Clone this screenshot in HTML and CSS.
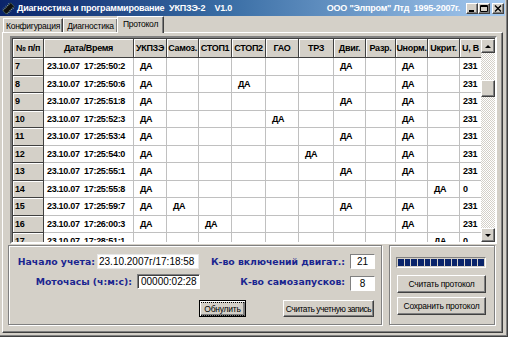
FILE: index.html
```html
<!DOCTYPE html>
<html lang="ru">
<head>
    <meta charset="UTF-8">
    <title>Диагностика и программирование УКПЗЭ-2</title>
    <link rel="stylesheet" href="styles.css">
</head>
<body>
    <div class="window">
        <div class="titlebar">
            <svg class="app-icon" width="13" height="13" viewBox="0 0 13 13">
                <g transform="rotate(-45 6.5 6.5)">
                    <rect x="1" y="4" width="11" height="5" fill="#101010" stroke="#5a7a5a" stroke-width="0.6"/>
                    <path d="M2 3v1M4 3v1M6 3v1M8 3v1M10 3v1M2 9v1M4 9v1M6 9v1M8 9v1M10 9v1" stroke="#c8d8c8" stroke-width="0.8"/>
                </g>
            </svg>
            <span class="title">Диагностика и программирование&nbsp; УКПЗЭ-2 &nbsp;&nbsp; V1.0</span>
            <span class="vendor">ООО "Элпром" Лтд&nbsp; 1995-2007г.</span>
            <div class="caption-buttons">
                <div class="cap-btn"><svg width="8" height="7" viewBox="0 0 8 7"><rect x="1" y="5" width="5" height="2" fill="#000"/></svg></div>
                <div class="cap-btn"><svg width="8" height="7" viewBox="0 0 8 7"><path d="M0.5 0.5h7v6h-7z" fill="none" stroke="#000"/><path d="M0 1.5h8" stroke="#000"/></svg></div>
                <div class="cap-btn close"><svg width="8" height="7" viewBox="0 0 8 7"><path d="M1 0.5l6 6M7 0.5l-6 6" stroke="#000" stroke-width="1.4"/></svg></div>
            </div>
        </div>

        <div class="tabs">
            <div class="tab tab-config">Конфигурация</div>
            <div class="tab tab-diag">Диагностика</div>
            <div class="tab tab-proto active">Протокол</div>
        </div>

        <div class="tab-panel">
            <div class="grid-frame">
                <div class="grid-view">
                    <table class="log">
                        <colgroup>
                            <col style="width:31px"><col style="width:90px"><col style="width:33px"><col style="width:32px">
                            <col style="width:33px"><col style="width:34px"><col style="width:33px"><col style="width:35px">
                            <col style="width:32px"><col style="width:30px"><col style="width:32px"><col style="width:32px">
                            <col style="width:22px">
                        </colgroup>
                        <thead>
                            <tr>
                                <th>№ п/п</th><th>Дата/Время</th><th>УКПЗЭ</th><th>Самоз.</th><th>СТОП1</th><th>СТОП2</th>
                                <th>ГАО</th><th>ТРЗ</th><th>Двиг.</th><th>Разр.</th><th>Uнорм.</th><th>Uкрит.</th><th>U, В</th>
                            </tr>
                        </thead>
                        <tbody>
                            <tr><td class="num">7</td><td>23.10.07&nbsp; 17:25:50:2</td><td class="yes">ДА</td><td></td><td></td><td></td><td></td><td></td><td class="yes">ДА</td><td></td><td class="yes">ДА</td><td></td><td>231</td></tr>
                            <tr><td class="num">8</td><td>23.10.07&nbsp; 17:25:50:6</td><td class="yes">ДА</td><td></td><td></td><td class="yes">ДА</td><td></td><td></td><td></td><td></td><td class="yes">ДА</td><td></td><td>231</td></tr>
                            <tr><td class="num">9</td><td>23.10.07&nbsp; 17:25:51:8</td><td class="yes">ДА</td><td></td><td></td><td></td><td></td><td></td><td class="yes">ДА</td><td></td><td class="yes">ДА</td><td></td><td>231</td></tr>
                            <tr><td class="num">10</td><td>23.10.07&nbsp; 17:25:52:3</td><td class="yes">ДА</td><td></td><td></td><td></td><td class="yes">ДА</td><td></td><td></td><td></td><td class="yes">ДА</td><td></td><td>231</td></tr>
                            <tr><td class="num">11</td><td>23.10.07&nbsp; 17:25:53:4</td><td class="yes">ДА</td><td></td><td></td><td></td><td></td><td></td><td class="yes">ДА</td><td></td><td class="yes">ДА</td><td></td><td>231</td></tr>
                            <tr><td class="num">12</td><td>23.10.07&nbsp; 17:25:54:0</td><td class="yes">ДА</td><td></td><td></td><td></td><td></td><td class="yes">ДА</td><td></td><td></td><td class="yes">ДА</td><td></td><td>231</td></tr>
                            <tr><td class="num">13</td><td>23.10.07&nbsp; 17:25:55:1</td><td class="yes">ДА</td><td></td><td></td><td></td><td></td><td></td><td class="yes">ДА</td><td></td><td class="yes">ДА</td><td></td><td>231</td></tr>
                            <tr><td class="num">14</td><td>23.10.07&nbsp; 17:25:55:8</td><td class="yes">ДА</td><td></td><td></td><td></td><td></td><td></td><td></td><td></td><td></td><td class="yes">ДА</td><td>0</td></tr>
                            <tr><td class="num">15</td><td>23.10.07&nbsp; 17:25:59:7</td><td class="yes">ДА</td><td class="yes">ДА</td><td></td><td></td><td></td><td></td><td class="yes">ДА</td><td></td><td class="yes">ДА</td><td></td><td>231</td></tr>
                            <tr><td class="num">16</td><td>23.10.07&nbsp; 17:26:00:3</td><td class="yes">ДА</td><td></td><td class="yes">ДА</td><td></td><td></td><td></td><td></td><td></td><td class="yes">ДА</td><td></td><td>231</td></tr>
                            <tr><td class="num">17</td><td>23.10.07&nbsp; 17:28:51:1</td><td></td><td></td><td></td><td></td><td></td><td></td><td></td><td></td><td></td><td class="yes">ДА</td><td>0</td></tr>
                        </tbody>
                    </table>
                </div>
                <div class="scrollbar">
                    <div class="sb-btn"><span class="arrow-up"></span></div>
                    <div class="sb-track"><div class="sb-thumb"></div></div>
                    <div class="sb-btn"><span class="arrow-down"></span></div>
                </div>
            </div>

            <div class="bottom">
                <div class="group counters">
                    <div class="form-row row-start">
                        <span class="lbl lbl-start">Начало учета:</span>
                        <span class="field field-start">23.10.2007г/17:18:58</span>
                        <span class="lbl lbl-starts">К-во включений двигат.:</span>
                        <span class="field field-small">21</span>
                    </div>
                    <div class="form-row row-hours">
                        <span class="lbl lbl-hours">Моточасы (ч:м:с):</span>
                        <span class="field field-hours">00000:02:28</span>
                        <span class="lbl lbl-self">К-во самозапусков:</span>
                        <span class="field field-small field-low">8</span>
                    </div>
                    <div class="form-row row-actions">
                        <button class="btn btn-reset"><span class="focus">Обнулить</span></button>
                        <button class="btn btn-account">Считать учетную запись</button>
                    </div>
                </div>
                <div class="group reader">
                    <div class="progress">
                        <span></span><span></span><span></span><span></span><span></span><span></span><span></span>
                        <span></span><span></span><span></span><span></span><span></span><span></span>
                    </div>
                    <button class="btn btn-wide">Считать протокол</button>
                    <button class="btn btn-wide">Сохранить протокол</button>
                </div>
            </div>
        </div>
    </div>
</body>
</html>
```

FILE: styles.css
```css
* {
    box-sizing: border-box;
}
body {
    margin: 0;
    background: #d4d0c8;
    font-family: "Liberation Sans", Arial, sans-serif;
}
.window {
    width: 508px;
    height: 337px;
    background: #d4d0c8;
    border-right: 1px solid #404040;
    border-bottom: 1px solid #404040;
    box-shadow: inset -1px -1px #808080;
    display: flex;
    flex-direction: column;
}

/* title bar */
.titlebar {
    height: 16px;
    margin-right: 2px;
    padding-left: 2px;
    display: flex;
    align-items: center;
    background: linear-gradient(to right, #0a246a, #3a6ea5 45%, #a6caf0);
    color: #ffffff;
    font-weight: bold;
    font-size: 9px;
    letter-spacing: -0.2px;
    white-space: nowrap;
}
.app-icon {
    flex: none;
    margin-right: 2px;
}
.vendor {
    margin-left: auto;
    margin-right: 6px;
}
.caption-buttons {
    display: flex;
    margin-right: 1px;
}
.cap-btn {
    width: 12px;
    height: 11px;
    background: #d4d0c8;
    border: 1px solid;
    border-color: #ffffff #404040 #404040 #ffffff;
    box-shadow: inset -1px -1px #808080;
    display: flex;
    align-items: center;
    justify-content: center;
}
.cap-btn.close {
    margin-left: 2px;
}

/* tabs */
.tabs {
    height: 16px;
    display: flex;
    align-items: flex-end;
    padding-left: 3px;
    font-size: 8.5px;
    letter-spacing: -0.25px;
    position: relative;
    z-index: 1;
}
.tab {
    height: 14px;
    display: flex;
    align-items: center;
    justify-content: center;
    border: 1px solid;
    border-bottom: none;
    border-color: #ffffff #404040 transparent #ffffff;
    box-shadow: inset -1px 0 #808080;
    color: #000;
}
.tab-config { width: 60px; }
.tab-diag { width: 55px; }
.tab-proto { width: 45px; }
.tab.active {
    height: 17px;
    margin-bottom: -1px;
    margin-left: -1px;
    width: 47px;
    background: #d4d0c8;
    padding-bottom: 2px;
}

/* tab page */
.tab-panel {
    margin-left: 2px;
    width: 501px;
    height: 301px;
    border: 1px solid;
    border-color: #ffffff #404040 #404040 #ffffff;
    box-shadow: inset -1px -1px #808080;
    padding: 3px 0 0 5px;
}
.grid-frame {
    margin-left: 2px;
    width: 487px;
    height: 208px;
    border: 2px solid;
    border-color: #808080 #ffffff #ffffff #808080;
    box-shadow: inset 1px 1px #404040;
    display: flex;
    background: #ffffff;
}
.grid-view {
    width: 469px;
    overflow: hidden;
    padding: 1px 0 0 1px;
}
table.log {
    border-collapse: separate;
    border-spacing: 0;
    table-layout: fixed;
    width: 469px;
    font-size: 9px;
    font-weight: bold;
    letter-spacing: -0.3px;
    color: #000;
}
.log th {
    height: 19px;
    padding: 0;
    text-align: center;
    background: #d4d0c8;
    border-right: 1px solid #404040;
    border-bottom: 1px solid #404040;
    box-shadow: inset 1px 1px #ffffff;
    white-space: nowrap;
    overflow: hidden;
}
.log tbody tr {
    height: 17.5px;
}
.log td {
    padding: 0 0 0 3px;
    border-right: 1px solid #c0c0c0;
    border-bottom: 1px solid #c0c0c0;
    white-space: nowrap;
    overflow: hidden;
    vertical-align: middle;
}
.log td.num {
    padding-left: 2px;
    background: #d4d0c8;
    border-right-color: #404040;
    border-bottom-color: #404040;
    box-shadow: inset 1px 1px #ffffff;
}
.log td.yes {
    padding-left: 6px;
}

/* scrollbar */
.scrollbar {
    width: 14px;
    display: flex;
    flex-direction: column;
    padding-top: 1px;
}
.sb-btn {
    height: 14px;
    background: #d4d0c8;
    border: 1px solid;
    border-color: #ffffff #404040 #404040 #ffffff;
    box-shadow: inset -1px -1px #808080;
    display: flex;
    align-items: center;
    justify-content: center;
}
.arrow-up {
    border-left: 3px solid transparent;
    border-right: 3px solid transparent;
    border-bottom: 3px solid #000;
}
.arrow-down {
    border-left: 3px solid transparent;
    border-right: 3px solid transparent;
    border-top: 3px solid #000;
}
.sb-track {
    flex: 1;
    background: repeating-conic-gradient(#ffffff 0 25%, #d4d0c8 0 50%) 0 0 / 2px 2px;
}
.sb-thumb {
    margin-top: 27px;
    height: 17px;
    background: #d4d0c8;
    border: 1px solid;
    border-color: #ffffff #404040 #404040 #ffffff;
    box-shadow: inset -1px -1px #808080;
}

/* bottom groups */
.bottom {
    display: flex;
    gap: 7px;
    margin-top: 1px;
}
.group {
    height: 80px;
    border: 1px solid #808080;
    box-shadow: inset 1px 1px #ffffff, 1px 1px #ffffff;
}
.counters {
    width: 374px;
    padding-top: 8px;
}
.reader {
    width: 106px;
    padding: 11px 0 0 6px;
    display: flex;
    flex-direction: column;
    gap: 4px;
}
.form-row {
    display: flex;
    align-items: center;
}
.row-hours {
    margin-top: 5px;
}
.row-actions {
    margin-top: 11px;
    padding-left: 190px;
    gap: 37px;
}
.lbl {
    font-family: "DejaVu Sans", Verdana, sans-serif;
    font-weight: bold;
    font-size: 9.3px;
    color: #1a2590;
    text-align: right;
    white-space: nowrap;
}
.lbl-start { width: 86px; margin-right: 2px; }
.lbl-starts { width: 146px; }
.lbl-hours { width: 123px; margin-right: 5px; }
.lbl-self { width: 145px; }
.field {
    height: 15px;
    background: #ffffff;
    border: 1px solid;
    border-color: #808080 #ffffff #ffffff #808080;
    font-size: 10px;
    color: #000;
    display: flex;
    align-items: center;
    white-space: nowrap;
}
.field-start {
    width: 102px;
    padding-left: 1px;
    border-color: #e8e8e8;
}
.field-hours {
    width: 63px;
    padding-left: 3px;
    box-shadow: inset 1px 1px #404040;
}
.field-small {
    width: 25px;
    margin-left: 5px;
    justify-content: center;
}
.field-low {
    position: relative;
    top: 2px;
}

/* buttons */
.btn {
    font-family: "Liberation Sans", Arial, sans-serif;
    font-size: 8.5px;
    letter-spacing: -0.25px;
    white-space: nowrap;
    color: #000;
    background: #d4d0c8;
    border: 1px solid;
    border-color: #ffffff #404040 #404040 #ffffff;
    box-shadow: inset -1px -1px #808080;
    padding: 0;
    display: flex;
    align-items: center;
    justify-content: center;
}
.btn-reset {
    width: 47px;
    height: 17px;
    border-color: #000;
    box-shadow: inset 1px 1px #ffffff, inset -2px -2px #808080;
}
.btn-reset .focus {
    border: 1px dotted #000;
    padding: 1px 4px;
}
.btn-account {
    width: 91px;
    height: 17px;
    letter-spacing: -0.45px;
}
.btn-wide {
    width: 89px;
    height: 18px;
    margin-left: 1px;
}
.progress {
    width: 90px;
    height: 11px;
    border: 1px solid;
    border-color: #808080 #ffffff #ffffff #808080;
    display: flex;
    gap: 1px;
    padding: 1px;
    margin-bottom: 3px;
}
.progress span {
    width: 6px;
    background: #0a246a;
}
```
